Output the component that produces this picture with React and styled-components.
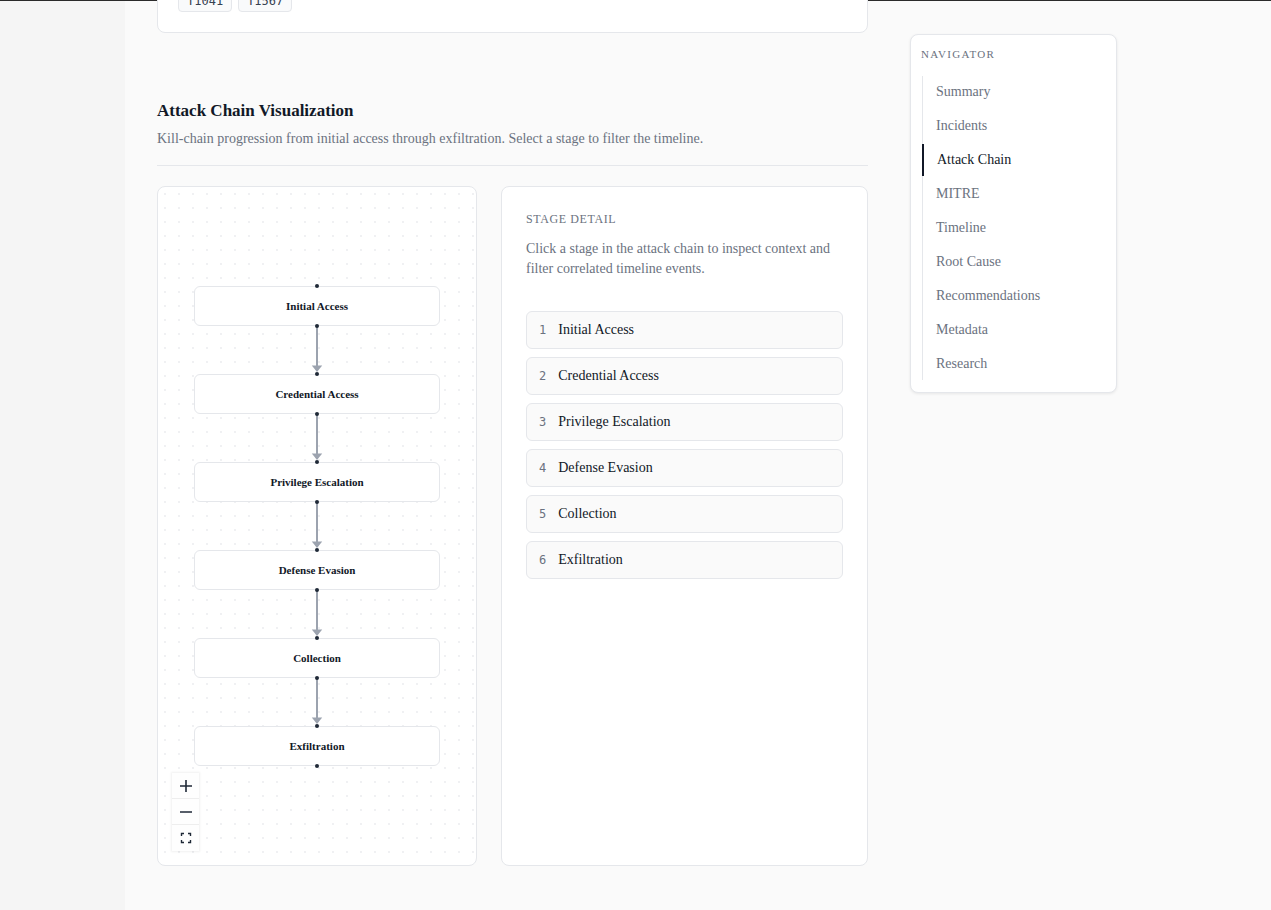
import React from "react";
import styled, { createGlobalStyle } from "styled-components";

const GlobalStyle = createGlobalStyle`
  html, body { margin: 0; padding: 0; height: 100%; }
  body {
    background: #fafafa;
    font-family: "Liberation Serif", "Times New Roman", serif;
    color: #111827;
    overflow: hidden;
  }
  #root { min-height: 100%; }
`;

const Shell = styled.div`
  display: flex;
  min-height: 910px;
  border-top: 1px solid #2b2b2b;
  box-sizing: border-box;
`;

const SideRail = styled.aside`
  width: 125px;
  flex-shrink: 0;
  background: #f5f5f5;
`;

const Main = styled.main`
  flex: 1;
  display: flex;
  align-items: flex-start;
  gap: 42px;
  padding-left: 32px;
  background: #fafafa;
`;

const Column = styled.div`
  width: 711px;
  flex-shrink: 0;
`;

const Card = styled.div`
  background: #fff;
  border: 1px solid #e5e7eb;
  border-radius: 8px;
  box-sizing: border-box;
`;

const TechniqueCard = styled(Card)`
  margin-top: -32px;
  padding: 20px 20px 20px;
`;

const BadgeRow = styled.div`
  display: flex;
  gap: 6px;
`;

const Badge = styled.span`
  display: inline-block;
  font-family: "DejaVu Sans Mono", "Liberation Mono", monospace;
  font-size: 12px;
  line-height: 16px;
  padding: 2px 8px;
  color: #374151;
  background: #f9fafb;
  border: 1px solid #e5e7eb;
  border-radius: 4px;
`;

const Section = styled.section`
  padding-top: 66px;
`;

const SectionHeader = styled.header`
  padding-bottom: 16px;
  border-bottom: 1px solid #e5e7eb;
  margin-bottom: 20px;
`;

const Title = styled.h2`
  margin: 0 0 6px;
  font-size: 17px;
  line-height: 24px;
  font-weight: 700;
  color: #111827;
`;

const Subtitle = styled.p`
  margin: 0;
  font-size: 14px;
  line-height: 20px;
  color: #6b7280;
`;

const ChainGrid = styled.div`
  display: grid;
  grid-template-columns: 320px 1fr;
  gap: 24px;
`;

const Canvas = styled(Card)`
  position: relative;
  height: 680px;
  overflow: hidden;
  background-color: #fff;
  background-image: radial-gradient(circle, #ebecef 0.6px, transparent 1px);
  background-size: 14px 14px;
  background-position: 0px 0px;
  display: flex;
  flex-direction: column;
  align-items: center;
  padding-top: 99px;
`;

const FlowNode = styled.div`
  position: relative;
  width: 246px;
  height: 40px;
  box-sizing: border-box;
  background: #fff;
  border: 1px solid #e5e7eb;
  border-radius: 6px;
  display: flex;
  align-items: center;
  justify-content: center;
  font-size: 11px;
  font-weight: 700;
  color: #111827;
`;

const Handle = styled.span`
  position: absolute;
  left: 50%;
  width: 4px;
  height: 4px;
  margin-left: -2px;
  border-radius: 50%;
  background: #1f2937;
  ${(p) => (p.$side === "top" ? "top: -3px;" : "bottom: -3px;")}
`;

const EdgeSvg = styled.svg`
  display: block;
  width: 14px;
  height: 48px;
`;

const Controls = styled.div`
  position: absolute;
  left: 14px;
  bottom: 14px;
  display: flex;
  flex-direction: column;
  box-shadow: 0 0 2px 1px rgba(0, 0, 0, 0.06);
`;

const ControlButton = styled.button`
  width: 27px;
  height: 26px;
  padding: 0;
  border: none;
  border-bottom: 1px solid #eee;
  background: #fefefe;
  display: flex;
  align-items: center;
  justify-content: center;
  cursor: pointer;
  &:last-child { border-bottom: none; }
`;

const DetailCard = styled(Card)`
  padding: 24px;
`;

const Eyebrow = styled.div`
  font-size: 12px;
  line-height: 16px;
  letter-spacing: 0.6px;
  text-transform: uppercase;
  color: #6b7280;
  margin-bottom: 12px;
`;

const DetailText = styled.p`
  margin: 0 0 32px;
  font-size: 14px;
  line-height: 20px;
  color: #6b7280;
`;

const StageList = styled.ol`
  list-style: none;
  margin: 0;
  padding: 0;
  display: flex;
  flex-direction: column;
  gap: 8px;
`;

const StageItem = styled.li`
  height: 38px;
  box-sizing: border-box;
  display: flex;
  align-items: center;
  gap: 12px;
  padding: 0 12px;
  background: #fafafa;
  border: 1px solid #e5e7eb;
  border-radius: 6px;
  font-size: 14px;
  color: #111827;
  cursor: pointer;
`;

const StageIndex = styled.span`
  font-family: "DejaVu Sans Mono", "Liberation Mono", monospace;
  font-size: 12px;
  color: #6b7280;
`;

const Navigator = styled(Card)`
  width: 207px;
  flex-shrink: 0;
  margin-top: 33px;
  padding: 12px 10px 12px;
  box-shadow: 0 1px 3px rgba(0, 0, 0, 0.08);
`;

const NavLabel = styled.div`
  font-size: 11px;
  line-height: 14px;
  letter-spacing: 1.3px;
  text-transform: uppercase;
  color: #6b7280;
  margin-bottom: 15px;
`;

const NavList = styled.ul`
  list-style: none;
  margin: 0 0 0 1px;
  padding: 0;
  border-left: 1px solid #e5e7eb;
  display: flex;
  flex-direction: column;
  gap: 2px;
`;

const NavItem = styled.li`
  height: 32px;
  display: flex;
  align-items: center;
  padding-left: 13px;
  margin-left: ${(p) => (p.$active ? "-1px" : "0")};
  border-left: ${(p) => (p.$active ? "2px solid #111827" : "none")};
  font-size: 14px;
  color: ${(p) => (p.$active ? "#111827" : "#6b7280")};
  cursor: pointer;
`;

const stages = [
  "Initial Access",
  "Credential Access",
  "Privilege Escalation",
  "Defense Evasion",
  "Collection",
  "Exfiltration",
];

const navItems = [
  "Summary",
  "Incidents",
  "Attack Chain",
  "MITRE",
  "Timeline",
  "Root Cause",
  "Recommendations",
  "Metadata",
  "Research",
];

function Edge() {
  return (
    <EdgeSvg viewBox="0 0 14 48">
      <line x1="7" y1="0" x2="7" y2="41" stroke="#9ca3af" strokeWidth="2" />
      <path d="M1.8 39.5 L12.2 39.5 L7 46 Z" fill="#9ca3af" />
    </EdgeSvg>
  );
}

const iconProps = {
  width: 14,
  height: 14,
  viewBox: "0 0 14 14",
  fill: "none",
  stroke: "#1f2937",
  strokeWidth: 1.6,
};

function PlusIcon() {
  return (
    <svg {...iconProps}>
      <path d="M7 1v12M1 7h12" />
    </svg>
  );
}

function MinusIcon() {
  return (
    <svg {...iconProps}>
      <path d="M1 7h12" />
    </svg>
  );
}

function FitIcon() {
  return (
    <svg {...iconProps} strokeWidth={1.4}>
      <path d="M2.5 5V2.5H5M9 2.5h2.5V5M11.5 9v2.5H9M5 11.5H2.5V9" />
    </svg>
  );
}

export default function App() {
  return (
    <>
      <GlobalStyle />
      <Shell>
        <SideRail />
        <Main>
          <Column>
            <TechniqueCard>
              <BadgeRow>
                <Badge>T1041</Badge>
                <Badge>T1567</Badge>
              </BadgeRow>
            </TechniqueCard>

            <Section>
              <SectionHeader>
                <Title>Attack Chain Visualization</Title>
                <Subtitle>
                  Kill-chain progression from initial access through exfiltration. Select a stage to filter the timeline.
                </Subtitle>
              </SectionHeader>

              <ChainGrid>
                <Canvas>
                  {stages.map((s, i) => (
                    <React.Fragment key={s}>
                      {i > 0 && <Edge />}
                      <FlowNode>
                        <Handle $side="top" />
                        {s}
                        <Handle $side="bottom" />
                      </FlowNode>
                    </React.Fragment>
                  ))}
                  <Controls>
                    <ControlButton aria-label="zoom in"><PlusIcon /></ControlButton>
                    <ControlButton aria-label="zoom out"><MinusIcon /></ControlButton>
                    <ControlButton aria-label="fit view"><FitIcon /></ControlButton>
                  </Controls>
                </Canvas>

                <DetailCard>
                  <Eyebrow>Stage Detail</Eyebrow>
                  <DetailText>
                    Click a stage in the attack chain to inspect context and filter correlated timeline events.
                  </DetailText>
                  <StageList>
                    {stages.map((s, i) => (
                      <StageItem key={s}>
                        <StageIndex>{i + 1}</StageIndex>
                        {s}
                      </StageItem>
                    ))}
                  </StageList>
                </DetailCard>
              </ChainGrid>
            </Section>
          </Column>

          <Navigator as="nav">
            <NavLabel>Navigator</NavLabel>
            <NavList>
              {navItems.map((n) => (
                <NavItem key={n} $active={n === "Attack Chain"}>
                  {n}
                </NavItem>
              ))}
            </NavList>
          </Navigator>
        </Main>
      </Shell>
    </>
  );
}
